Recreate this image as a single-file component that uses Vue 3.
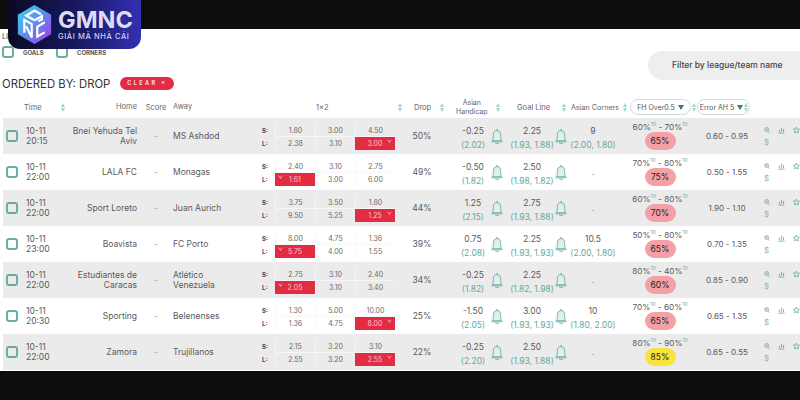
<script setup>
const rows = [
  { d: '10-11', t: '20:15', home: 'Bnei Yehuda Tel Aviv', away: 'MS Ashdod', s: ['1.80', '3.00', '4.50'], l: ['2.38', '3.10', '3.00'], red: 2, drop: '50%', ah: '-0.25', ahp: '(2.02)', gl: '2.25', glp: '(1.93, 1.88)', c: '9', cp: '(2.00, 1.80)', a: '60%', b: '70%', fh: '65%', err: '0.60 - 0.95' },
  { d: '10-11', t: '22:00', home: 'LALA FC', away: 'Monagas', s: ['2.40', '3.10', '2.75'], l: ['1.61', '3.00', '6.00'], red: 0, drop: '49%', ah: '-0.50', ahp: '(1.82)', gl: '2.50', glp: '(1.98, 1.82)', c: '-', cp: '', a: '70%', b: '80%', fh: '75%', err: '0.50 - 1.55' },
  { d: '10-11', t: '22:00', home: 'Sport Loreto', away: 'Juan Aurich', s: ['3.75', '3.50', '1.80'], l: ['9.50', '5.25', '1.25'], red: 2, drop: '44%', ah: '1.25', ahp: '(2.15)', gl: '2.75', glp: '(1.93, 1.88)', c: '-', cp: '', a: '60%', b: '80%', fh: '70%', err: '1.90 - 1.10' },
  { d: '10-11', t: '23:00', home: 'Boavista', away: 'FC Porto', s: ['8.00', '4.75', '1.36'], l: ['5.75', '4.00', '1.55'], red: 0, drop: '39%', ah: '0.75', ahp: '(2.08)', gl: '2.25', glp: '(1.93, 1.93)', c: '10.5', cp: '(2.00, 1.80)', a: '50%', b: '80%', fh: '65%', err: '0.70 - 1.35' },
  { d: '10-11', t: '22:00', home: 'Estudiantes de Caracas', away: 'Atlético Venezuela', s: ['2.75', '3.10', '2.40'], l: ['2.05', '3.10', '3.40'], red: 0, drop: '34%', ah: '-0.25', ahp: '(1.82)', gl: '2.25', glp: '(1.82, 1.98)', c: '-', cp: '', a: '80%', b: '40%', fh: '60%', err: '0.85 - 0.90' },
  { d: '10-11', t: '20:30', home: 'Sporting', away: 'Belenenses', s: ['1.30', '5.00', '10.00'], l: ['1.36', '4.75', '8.00'], red: 2, drop: '25%', ah: '-1.50', ahp: '(2.05)', gl: '3.00', glp: '(1.93, 1.93)', c: '10', cp: '(1.80, 2.00)', a: '70%', b: '60%', fh: '65%', err: '0.65 - 1.35' },
  { d: '10-11', t: '22:00', home: 'Zamora', away: 'Trujillanos', s: ['2.15', '3.20', '3.10'], l: ['2.55', '3.20', '2.55'], red: 2, drop: '22%', ah: '-0.25', ahp: '(2.20)', gl: '2.50', glp: '(1.93, 1.88)', c: '-', cp: '', a: '80%', b: '90%', fh: '85%', err: '0.65 - 0.55', hot: true },
]
</script>

<template>
  <div class="page">
    <div class="bar-top"></div>

    <div class="logo">
      <svg class="logo-mark" viewBox="0 0 40 44" width="37" height="41">
        <defs>
          <linearGradient id="hex" x1="0" y1="0" x2="1" y2="1">
            <stop offset="0" stop-color="#35d8f2" />
            <stop offset="0.5" stop-color="#5f8cf0" />
            <stop offset="1" stop-color="#a835e0" />
          </linearGradient>
        </defs>
        <path d="M20 1 38 11.500V32.500L20 43 2 32.500V11.500Z" fill="url(#hex)" />
        <path d="M27 11 20 7 11 12.500 20 17.500 28 13V16.500L24 18.500" fill="none" stroke="#fff" stroke-width="2.400" />
        <path d="M9 31V17L17 21.500V36L11 24" fill="none" stroke="#fff" stroke-width="2.400" />
        <path d="M31 19.500 23 24.500V35L31 30.500" fill="none" stroke="#fff" stroke-width="2.400" />
      </svg>
      <div class="logo-text">
        <div class="logo-name">GMNC</div>
        <div class="logo-sub">GIẢI MÃ NHÀ CÁI</div>
      </div>
    </div>

    <div class="content">
      <div class="tools">
        <div class="tools-left">
          <div class="li">LI</div>
          <div class="checks">
            <span class="box"></span><b>GOALS</b>
            <span class="box"></span><b>CORNERS</b>
          </div>
        </div>
        <div class="filter">Filter by league/team name</div>
      </div>

      <div class="ordered">
        <span class="ordered-title">ORDERED BY: DROP</span>
        <span class="clear">CLEAR ×</span>
      </div>

      <div class="row head">
        <div></div>
        <div class="time-h">Time<i class="sort"></i></div>
        <div class="home">Home</div>
        <div class="score">Score</div>
        <div class="away">Away</div>
        <div class="odds-h">1x2<i class="sort"></i></div>
        <div class="drop-h">Drop<i class="sort"></i></div>
        <div class="ah-h"><span>Asian<br />Handicap</span><i class="sort"></i></div>
        <div class="gl-h">Goal Line<i class="sort"></i></div>
        <div class="c-h">Asian Corners<i class="sort"></i></div>
        <div class="pick-wrap fh-pick"><span class="pick">FH Over0.5 <em></em></span><i class="sort"></i></div>
        <div class="pick-wrap err-pick"><span class="pick">Error AH 5 <em></em></span><i class="sort"></i></div>
        <div></div>
      </div>

      <div v-for="(r, i) in rows" :key="i" class="row" :class="{ alt: i % 2 === 0 }">
        <div class="check-cell"><span class="box"></span></div>
        <div class="time">{{ r.d }}<br />{{ r.t }}</div>
        <div class="home">{{ r.home }}</div>
        <div class="score">-</div>
        <div class="away">{{ r.away }}</div>
        <div class="odds">
          <b class="sl">S:</b>
          <span v-for="(v, k) in r.s" :key="k" class="odd top">{{ v }}</span>
          <b class="sl">L:</b>
          <span v-for="(v, k) in r.l" :key="k" class="odd" :class="{ red: k === r.red }">
            <svg v-if="k === r.red" class="heart" :class="k === 0 ? 'left' : 'right'" viewBox="0 0 10 8" width="7" height="6">
              <path d="M1 1 5 4 9 1 5 7Z" fill="#ff9aa8" />
            </svg>
            {{ v }}
          </span>
        </div>
        <div class="mid drop">{{ r.drop }}</div>
        <div class="line ah">
          <span>{{ r.ah }}</span>
          <span class="price">{{ r.ahp }}</span>
        </div>
        <div class="bell-cell">
          <svg viewBox="0 0 14 20" width="12" height="17" fill="none" stroke="#5fa99a" stroke-width="1">
            <path d="M7 1V3M7 3C3.500 3 2.800 6 2.800 9C2.800 12 2.300 13.500 1.500 15H12.500C11.700 13.500 11.200 12 11.200 9C11.200 6 10.500 3 7 3Z" fill="#dff1ec" />
            <path d="M0.500 16.200H13.500M5 18H9" />
          </svg>
        </div>
        <div class="line gl">
          <span>{{ r.gl }}</span>
          <span class="price">{{ r.glp }}</span>
        </div>
        <div class="bell-cell">
          <svg viewBox="0 0 14 20" width="12" height="17" fill="none" stroke="#5fa99a" stroke-width="1">
            <path d="M7 1V3M7 3C3.500 3 2.800 6 2.800 9C2.800 12 2.300 13.500 1.500 15H12.500C11.700 13.500 11.200 12 11.200 9C11.200 6 10.500 3 7 3Z" fill="#dff1ec" />
            <path d="M0.500 16.200H13.500M5 18H9" />
          </svg>
        </div>
        <div class="line">
          <span :class="{ none: !r.cp }">{{ r.c }}</span>
          <span v-if="r.cp" class="price">{{ r.cp }}</span>
        </div>
        <div class="fh">
          <div class="fh-range">{{ r.a }}<sup>10</sup> - {{ r.b }}<sup>10</sup></div>
          <div class="pill" :class="{ hot: r.hot }">{{ r.fh }}</div>
        </div>
        <div class="mid err">{{ r.err }}</div>
        <div class="actions">
          <div class="icons">
            <svg viewBox="0 0 10 10" width="8" height="8" fill="none" stroke="#4f9e90" stroke-width="1">
              <circle cx="4.200" cy="4.200" r="3.200" />
              <path d="M6.600 6.600 9.500 9.500M4.200 2.800V5.600M2.800 4.200H5.600" />
            </svg>
            <svg viewBox="0 0 10 10" width="9" height="8" fill="none" stroke="#4f9e90" stroke-width="1">
              <path d="M0.500 9.500H9.500M2 8V4.500M5 8V1.500M8 8V3.500" />
            </svg>
            <svg viewBox="0 0 10 10" width="9" height="8" fill="none" stroke="#4f9e90" stroke-width="1">
              <path d="M5 0.800 6.300 3.600 9.300 4 7.100 6.100 7.700 9.100 5 7.600 2.300 9.100 2.900 6.100 0.700 4 3.700 3.600Z" />
            </svg>
          </div>
          <div class="dollar">$</div>
        </div>
      </div>
    </div>

    <div class="bar-bottom"></div>
  </div>
</template>

<style>
html, body {
  margin: 0;
  background: #0d0d0d;
}
</style>

<style scoped>
.page {
  position: relative;
  width: 800px;
  height: 400px;
  overflow: hidden;
  display: flex;
  flex-direction: column;
  font-family: Inter, "Liberation Sans", sans-serif;
  color: #5a5a5a;
  background: #fff;
}
.bar-top {
  height: 29px;
  background: #0d0d0d;
}
.bar-bottom {
  height: 29px;
  background: #0d0d0d;
}
.logo {
  position: absolute;
  left: 8px;
  top: 0;
  width: 133px;
  height: 49px;
  border-radius: 0 0 12px 12px;
  background: linear-gradient(90deg, #0a0a24 0%, #17185e 50%, #3230b4 100%);
  display: flex;
  align-items: center;
  gap: 5px;
  padding-left: 8px;
  box-sizing: border-box;
}
.logo-mark {
  flex: none;
}
.logo-name {
  font-size: 23.500px;
  line-height: 24px;
  font-weight: 700;
  color: #dcdcf5;
}
.logo-sub {
  font-size: 7.500px;
  line-height: 9px;
  font-weight: 500;
  color: #cfcff0;
  white-space: nowrap;
  letter-spacing: 0.6px;
}
.content {
  flex: 1;
  min-height: 0;
  display: flex;
  flex-direction: column;
}
.tools {
  height: 42px;
  display: flex;
  justify-content: space-between;
}
.tools-left {
  padding: 4px 0 0 2px;
}
.li {
  font-size: 7px;
  line-height: 8px;
  font-weight: 700;
  color: #4a9a8f;
}
.checks {
  display: flex;
  align-items: center;
  margin-top: 5px;
  font-size: 6px;
  color: #555;
}
.checks b {
  margin-left: 9px;
  width: 33px;
  font-weight: 700;
}
.box {
  display: block;
  flex: none;
  width: 8px;
  height: 8px;
  border: 2px solid #6aaea2;
  border-radius: 3px;
}
.filter {
  width: 152px;
  height: 29px;
  margin-top: 22px;
  padding-left: 24px;
  box-sizing: border-box;
  border-radius: 15px 0 0 15px;
  background: #eeeeee;
  font-size: 8.500px;
  font-weight: 500;
  line-height: 29px;
  color: #444;
}
.ordered {
  height: 25px;
  display: flex;
  align-items: center;
  padding-left: 2px;
  gap: 10px;
}
.ordered-title {
  font-size: 11.300px;
  color: #333;
  white-space: nowrap;
}
.clear {
  width: 54px;
  height: 13px;
  border-radius: 7px;
  background: #e22c44;
  color: #fbdde1;
  font-size: 5.500px;
  font-weight: 700;
  letter-spacing: 2.400px;
  line-height: 13px;
  text-align: center;
}
.row {
  display: grid;
  grid-template-columns: 22px 38px 77px 32px 90px 133px 54px 38px 20px 44px 20px 44px 90px 44px 1fr;
  align-items: center;
  height: 36px;
  margin-left: 3px;
  font-size: 8.500px;
}
.row.alt {
  background: #ebebeb;
}
.row.head {
  height: 22px;
  font-size: 7.500px;
  color: #666;
}
.check-cell {
  padding-left: 3px;
}
.time {
  padding-left: 1px;
  line-height: 10px;
}
.home {
  text-align: right;
  line-height: 10px;
  padding-left: 8px;
  padding-right: 3px;
}
.score {
  text-align: center;
}
.row:not(.head) .score {
  color: #aaa;
}
.away {
  line-height: 10px;
  padding: 0 30px 0 1px;
}
.sort {
  position: relative;
  display: block;
  flex: none;
  width: 5px;
  height: 9px;
}
.sort::before,
.sort::after {
  content: "";
  position: absolute;
  left: 0;
  border-left: 2.500px solid transparent;
  border-right: 2.500px solid transparent;
}
.sort::before {
  top: 0;
  border-bottom: 4px solid #a5d3c9;
}
.sort::after {
  bottom: 0;
  border-top: 4px solid #a5d3c9;
}
.time-h,
.odds-h,
.drop-h,
.ah-h,
.gl-h,
.c-h,
.pick-wrap {
  display: flex;
  align-items: center;
  white-space: nowrap;
}
.time-h {
  gap: 19px;
  margin-left: -1px;
}
.odds-h {
  padding-left: 54px;
  gap: 69px;
}
.drop-h {
  padding-left: 19px;
  gap: 9px;
}
.ah-h {
  grid-column: span 2;
  padding-left: 7px;
  gap: 8px;
  text-align: center;
  line-height: 9px;
  font-size: 7px;
}
.gl-h {
  grid-column: span 2;
  padding-left: 10px;
  gap: 12px;
}
.c-h {
  gap: 4px;
  font-size: 7.200px;
}
.pick {
  display: flex;
  align-items: center;
  justify-content: center;
  gap: 3px;
  box-sizing: border-box;
  height: 16px;
  border: 1px solid #cfdedb;
  border-radius: 8px;
  font-size: 7px;
  color: #555;
  background: #fff;
}
.pick em {
  width: 0;
  height: 0;
  border-left: 3.500px solid transparent;
  border-right: 3.500px solid transparent;
  border-top: 5px solid #2f7f74;
}
.fh-pick {
  margin-left: 15px;
  gap: 1px;
}
.fh-pick .pick {
  width: 61px;
}
.err-pick {
  margin-left: -8px;
}
.err-pick .pick {
  width: 60px;
  padding-right: 4px;
}
.err-pick .sort {
  margin-left: -6px;
}
.odds {
  display: grid;
  grid-template-columns: 13px 40px 40px 40px;
  grid-template-rows: 13px 13px;
  align-items: center;
  font-size: 7px;
  padding-top: 2px;
}
.sl {
  font-size: 6px;
  color: #444;
}
.odd {
  position: relative;
  box-sizing: border-box;
  height: 13px;
  line-height: 13px;
  text-align: center;
  color: #6a6a6a;
  border-left: 1px solid #f6f6f6;
}
.odd.top {
  border-bottom: 1px solid #f6f6f6;
}
.odd.red {
  border-left: 0;
  background: #e22c44;
  color: #fbc9cf;
}
.heart {
  position: absolute;
  top: 1px;
}
.heart.left {
  left: 2px;
}
.heart.right {
  right: 2px;
}
.mid {
  text-align: center;
  white-space: nowrap;
}
.line {
  display: flex;
  flex-direction: column;
  align-items: center;
  gap: 4px;
  padding-top: 3px;
  white-space: nowrap;
  line-height: 10px;
}
.line.ah {
  padding-left: 10px;
}
.line.gl {
  padding-left: 6px;
}
.none {
  color: #aaa;
}
.price {
  color: #5fa99a;
}
.bell-cell {
  display: flex;
  justify-content: center;
}
.fh {
  display: flex;
  flex-direction: column;
  align-items: center;
}
.fh-range {
  font-size: 8.200px;
  line-height: 10px;
  white-space: nowrap;
}
.fh-range sup {
  font-size: 5px;
  line-height: 0;
  color: #5fa99a;
}
.pill {
  width: 31px;
  height: 18px;
  border-radius: 9px;
  background: #f4a0a6;
  color: #222;
  line-height: 18px;
  text-align: center;
  font-size: 8.500px;
}
.pill.hot {
  background: #fae43c;
}
.err {
  font-size: 8px;
}
.actions {
  padding-left: 15px;
  overflow: hidden;
}
.icons {
  display: flex;
  gap: 8px;
  white-space: nowrap;
}
.dollar {
  margin-top: 4px;
  color: #7dbcaf;
  font-size: 8px;
  line-height: 9px;
}
</style>
